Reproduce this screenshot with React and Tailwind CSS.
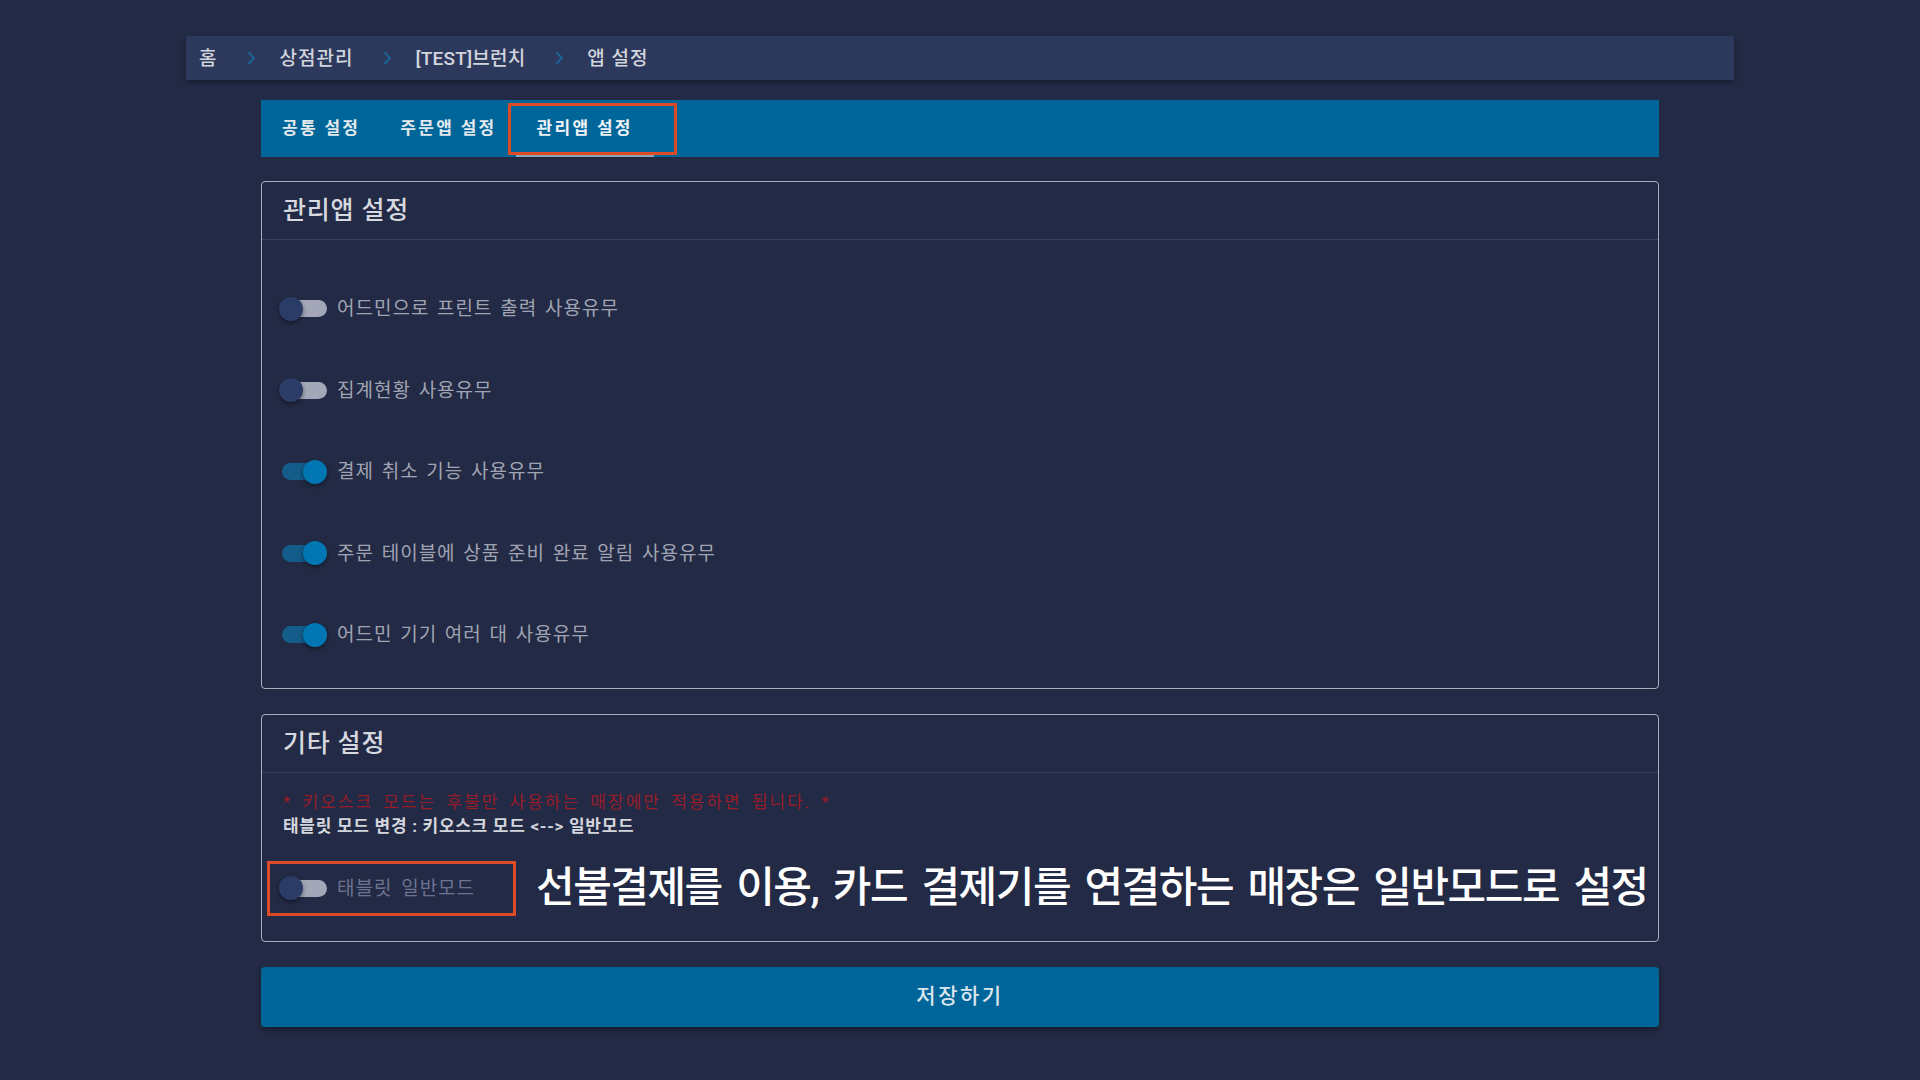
import React from "react";

const Chevron = () => (
  <svg width="9" height="14" viewBox="0 0 9 14" className="shrink-0">
    <path d="M2 2 L7 7 L2 12" fill="none" stroke="#1b6396" strokeWidth="2" strokeLinecap="round" strokeLinejoin="round" />
  </svg>
);

const Toggle = ({ on }) => (
  <div className="relative w-[48px] h-[24px] shrink-0">
    <div className={on ? "absolute left-[3px] top-[3.5px] w-[45px] h-[17px] rounded-full bg-[#145c8a]" : "absolute left-[3px] top-[3.5px] w-[45px] h-[17px] rounded-full bg-[#a4a7b7]"} />
    <div className={on ? "absolute top-0 left-[24px] w-[24px] h-[24px] rounded-full bg-[#0077b2] shadow-[0_2px_4px_rgba(0,0,0,0.45)]" : "absolute top-0 left-0 w-[24px] h-[24px] rounded-full bg-[#2b3c66] shadow-[0_2px_4px_rgba(0,0,0,0.45)]"} />
  </div>
);

const Row = ({ on, label }) => (
  <div className="h-[81.5px] flex items-center gap-[10px]">
    <Toggle on={on} />
    <span className="text-[19px] tracking-[1px] [word-spacing:2px] text-[#a0a4b2] leading-none">{label}</span>
  </div>
);

export default function App() {
  const crumbs = [
    { t: "홈", c: "text-[19px] font-medium tracking-[1px] text-[#d2d5dc] leading-none" },
    { t: "상점관리", c: "text-[19px] font-medium tracking-[1px] text-[#d2d5dc] leading-none" },
    { t: "[TEST]브런치", c: "text-[19px] font-medium tracking-[0.2px] text-[#d2d5dc] leading-none" },
    { t: "앱 설정", c: "text-[19px] font-medium tracking-[1px] text-[#d2d5dc] leading-none" },
  ];
  return (
    <div className="min-h-screen w-full bg-[#232a45] pt-[36px] font-['Roboto','Noto_Sans_CJK_KR',sans-serif]">
      {/* breadcrumb */}
      <div className="mx-auto w-[1548px] h-[44px] bg-[#2d395c] shadow-[0_3px_5px_rgba(0,0,0,0.3)] flex items-center pl-[13px]">
        {crumbs.map((c, i) => (
          <React.Fragment key={c.t}>
            {i > 0 && (
              <span className="ml-[30px] mr-[23px] flex items-center">
                <Chevron />
              </span>
            )}
            <span className={c.c}>{c.t}</span>
          </React.Fragment>
        ))}
      </div>

      <div className="mx-auto w-[1398px] mt-[20px]">
        {/* tabs */}
        <div className="h-[57px] bg-[#006699] flex items-stretch">
          <div className="px-[21px] flex items-center text-[17px] font-bold tracking-[2.3px] text-[#e2e8ee]">공통 설정</div>
          <div className="px-[19px] flex items-center text-[17px] font-bold tracking-[2.3px] text-[#e2e8ee]">주문앱 설정</div>
          <div className="relative px-[21px] flex items-center text-[17px] font-bold tracking-[2.3px] text-[#eef2f6]">
            관리앱 설정
            <div className="absolute left-0 right-0 bottom-0 h-[2px] bg-[#8fa4b8]" />
            <div className="absolute left-[-8px] right-[-23px] top-[3px] bottom-[2px] border-[3px] border-[#dc4a26]" />
          </div>
        </div>

        {/* card 1 */}
        <div className="mt-[24px] border-[1.5px] border-[#abafbb] rounded-[4px]">
          <div className="h-[58px] px-[21px] flex items-center border-b border-[#394163]">
            <span className="text-[25px] font-medium tracking-[0.8px] text-[#d6d9df] leading-none">관리앱 설정</span>
          </div>
          <div className="pt-[28px] pb-[12px] pl-[17px]">
            <Row on={false} label="어드민으로 프린트 출력 사용유무" />
            <Row on={false} label="집계현황 사용유무" />
            <Row on={true} label="결제 취소 기능 사용유무" />
            <Row on={true} label="주문 테이블에 상품 준비 완료 알림 사용유무" />
            <Row on={true} label="어드민 기기 여러 대 사용유무" />
          </div>
        </div>

        {/* card 2 */}
        <div className="mt-[25px] border-[1.5px] border-[#abafbb] rounded-[4px]">
          <div className="h-[58px] px-[21px] flex items-center border-b border-[#394163]">
            <span className="text-[25px] font-medium tracking-[0.8px] text-[#d6d9df] leading-none">기타 설정</span>
          </div>
          <div className="pt-[18px] pb-[25px] pl-[17px]">
            <div className="pl-[4px] h-[24px] flex items-center text-[17px] tracking-[2px] [word-spacing:4px] text-[#981c28] leading-none">
              * 키오스크 모드는 후불만 사용하는 매장에만 적용하면 됩니다. *
            </div>
            <div className="pl-[4px] h-[24px] flex items-center text-[17px] font-bold tracking-[0.7px] text-[#d3d6dc] leading-none">
              태블릿 모드 변경 : 키오스크 모드 &lt;--&gt; 일반모드
            </div>
            <div className="mt-[22px] -ml-[12px] flex items-center gap-[20px]">
              <div className="w-[249px] h-[55px] border-[3px] border-[#dc4a26] pl-[9px] flex items-center gap-[10px]">
                <Toggle on={false} />
                <span className="text-[19px] tracking-[1px] [word-spacing:3px] text-[#6c7290] leading-none">태블릿 일반모드</span>
              </div>
              <span className="text-[42px] font-medium tracking-[-1.5px] [word-spacing:5.5px] text-white leading-none">
                선불결제를 이용, 카드 결제기를 연결하는 매장은 일반모드로 설정
              </span>
            </div>
          </div>
        </div>

        {/* save button */}
        <button className="mt-[25px] w-full h-[60px] rounded-[4px] bg-[#006699] shadow-[0_3px_5px_rgba(0,0,0,0.35)] flex items-center justify-center">
          <span className="text-[21px] font-medium tracking-[2.5px] text-[#dbe5ee] leading-none">저장하기</span>
        </button>
      </div>
    </div>
  );
}
